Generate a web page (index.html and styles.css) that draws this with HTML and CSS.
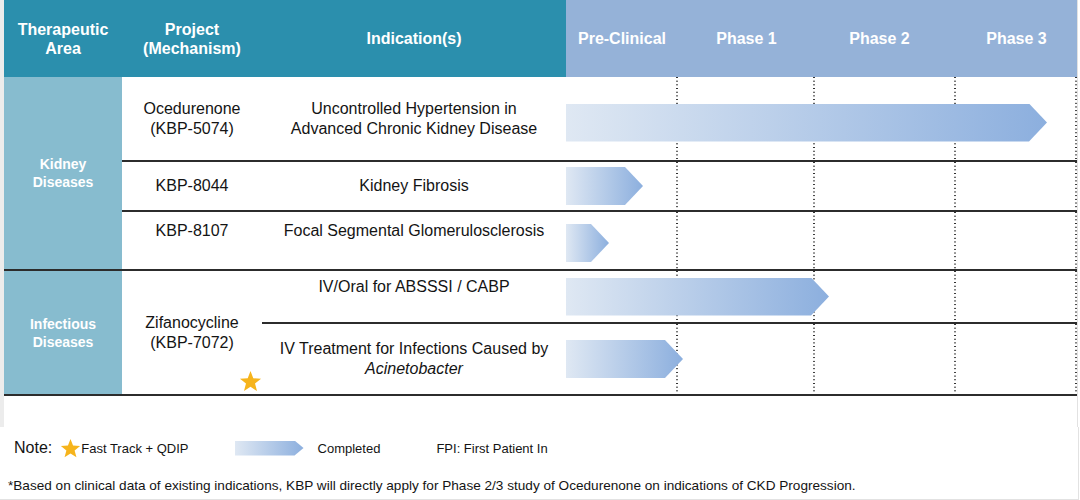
FILE: index.html
```html
<!DOCTYPE html>
<html>
<head>
<meta charset="utf-8">
<link rel="stylesheet" href="styles.css">
</head>
<body>
<div class="page">
  <div class="top">
    <div class="chart">
      <div class="head">
        <div class="hc teal">Therapeutic<br>Area</div>
        <div class="hc teal">Project<br>(Mechanism)</div>
        <div class="hc teal">Indication(s)</div>
        <div class="hc blue">Pre-Clinical</div>
        <div class="hc blue">Phase 1</div>
        <div class="hc blue p2">Phase 2</div>
        <div class="hc blue">Phase 3</div>
      </div>

      <div class="group">
        <div class="area">Kidney<br>Diseases</div>
        <div class="rows">
          <div class="row r1">
            <div class="proj">Ocedurenone<br>(KBP-5074)</div>
            <div class="ind"><span>Uncontrolled Hypertension in<br>Advanced Chronic Kidney Disease</span></div>
            <div class="track">
              <span class="ph c1"></span><span class="ph c2"></span><span class="ph c3"></span><span class="ph c4"></span>
              <span class="arrow a-low" style="width:481px"></span>
            </div>
          </div>
          <div class="row r2">
            <div class="proj">KBP-8044</div>
            <div class="ind">Kidney Fibrosis</div>
            <div class="track">
              <span class="ph c1"></span><span class="ph c2"></span><span class="ph c3"></span><span class="ph c4"></span>
              <span class="arrow" style="width:77px"></span>
            </div>
          </div>
          <div class="row r3">
            <div class="proj top9">KBP-8107</div>
            <div class="ind top9">Focal Segmental Glomerulosclerosis</div>
            <div class="track">
              <span class="ph c1"></span><span class="ph c2"></span><span class="ph c3"></span><span class="ph c4"></span>
              <span class="arrow a-low2" style="width:43px"></span>
            </div>
          </div>
        </div>
      </div>

      <div class="group">
        <div class="area">Infectious<br>Diseases</div>
        <div class="proj tall">
          <span>Zifanocycline<br>(KBP-7072)</span>
          <svg class="star" viewBox="0 0 24 24" aria-hidden="true"><polygon points="12,1 14.9,8.6 23,9.1 16.7,14.2 18.8,22 12,17.6 5.2,22 7.3,14.2 1,9.1 9.1,8.6"/></svg>
        </div>
        <div class="subs">
          <div class="sub sa">
            <div class="ind top6">IV/Oral for ABSSSI / CABP</div>
            <div class="track">
              <span class="ph c1"></span><span class="ph c2"></span><span class="ph c3"></span><span class="ph c4"></span>
              <span class="arrow" style="width:263px"></span>
            </div>
          </div>
          <div class="sub sb">
            <div class="ind"><span>IV Treatment for Infections Caused by<br><em>Acinetobacter</em></span></div>
            <div class="track">
              <span class="ph c1"></span><span class="ph c2"></span><span class="ph c3"></span><span class="ph c4"></span>
              <span class="arrow" style="width:117px"></span>
            </div>
          </div>
        </div>
      </div>
    </div>
  </div>

  <div class="foot">
    <div class="note">
      <span class="note-label">Note:</span>
      <svg class="lstar" viewBox="0 0 24 24" aria-hidden="true"><polygon points="12,1 14.9,8.6 23,9.1 16.7,14.2 18.8,22 12,17.6 5.2,22 7.3,14.2 1,9.1 9.1,8.6"/></svg>
      <span class="ft">Fast Track + QDIP</span>
      <span class="larrow"></span>
      <span class="done">Completed</span>
      <span class="fpi">FPI: First Patient In</span>
    </div>
    <div class="footnote">*Based on clinical data of existing indications, KBP will directly apply for Phase 2/3 study of Ocedurenone on indications of CKD Progression.</div>
  </div>
</div>
</body>
</html>
```
FILE: styles.css
```css
* { box-sizing: border-box; }

body {
  margin: 0;
  background: #ffffff;
  font-family: "Liberation Sans", Arial, sans-serif;
  color: #141414;
}

.page {
  width: 1080px;
  height: 500px;
  background: #ffffff;
}

.top {
  width: 1078px;
  height: 427px;
  border-left: 4px solid #ececec;
  border-right: 1px solid #e2e2e2;
  background: #ffffff;
}

.chart {
  width: 1073px;
}

/* Header */
.head {
  display: grid;
  grid-template-columns: 118px 140px 304px 112px 137px 141px 121px;
  height: 77px;
  color: #ffffff;
  font-weight: bold;
  font-size: 16px;
  line-height: 19px;
  text-align: center;
}

.hc {
  display: flex;
  align-items: center;
  justify-content: center;
}

.teal { background: #2b8fad; }
.blue { background: #95b2d8; }
.p2 { padding-right: 12px; }

/* Groups */
.group {
  display: flex;
  border-bottom: 2px solid #2c2c2c;
}

.area {
  width: 118px;
  flex: none;
  background: #87bccf;
  color: #ffffff;
  font-weight: bold;
  font-size: 14px;
  line-height: 18px;
  display: flex;
  align-items: center;
  justify-content: center;
  text-align: center;
}

.rows {
  flex: 1;
  display: flex;
  flex-direction: column;
}

.row {
  display: grid;
  grid-template-columns: 140px 304px 511px;
}

.row + .row { border-top: 2px solid #2c2c2c; }

.r1 { height: 83px; }
.r2 { height: 50px; }
.r3 { height: 59px; }

.proj, .ind {
  display: flex;
  align-items: center;
  justify-content: center;
  text-align: center;
  font-size: 16px;
  line-height: 20px;
}

.top9 { align-items: flex-start; padding-top: 9px; }
.top6 { align-items: flex-start; padding-top: 6px; }

.ind em { font-style: italic; }

.proj.tall {
  width: 140px;
  flex: none;
  position: relative;
}

.star {
  position: absolute;
  right: 0;
  bottom: 1px;
  width: 23px;
  height: 23px;
  fill: #f6b41c;
}

.subs {
  flex: 1;
  display: flex;
  flex-direction: column;
}

.sub {
  display: grid;
  grid-template-columns: 304px 511px;
}

.sa { height: 51px; }
.sb { height: 72px; border-top: 2px solid #2c2c2c; }

/* Timeline */
.track {
  display: grid;
  grid-template-columns: 112px 137px 141px 121px;
  align-items: center;
}

.ph {
  grid-row: 1;
  align-self: stretch;
  background-image: linear-gradient(#2a2a2a 0 1.3px, transparent 1.3px);
  background-size: 2px 3.7px;
  background-repeat: repeat-y;
  background-position: right top;
}

.c1 { grid-column: 1; }
.c2 { grid-column: 2; }
.c3 { grid-column: 3; }
.c4 { grid-column: 4; }

.arrow {
  grid-row: 1;
  grid-column: 1 / -1;
  justify-self: start;
  height: 38px;
  background: linear-gradient(to right, #dfe8f3, #8cafde);
  clip-path: polygon(0 0, calc(100% - 18px) 0, 100% 50%, calc(100% - 18px) 100%, 0 100%);
}

.a-low { margin-top: 8px; }
.a-low2 { margin-top: 5px; }

/* Footer */
.foot {
  width: 1079px;
  height: 73px;
  border-right: 1px solid #e2e2e2;
  border-bottom: 1px solid #e2e2e2;
  padding-top: 9px;
}

.note {
  display: flex;
  align-items: center;
  height: 24px;
  padding-left: 14px;
  font-size: 13px;
}

.note-label {
  font-size: 16px;
}

.lstar {
  width: 21px;
  height: 21px;
  margin-left: 8px;
  fill: #f6b41c;
}

.larrow {
  width: 69px;
  height: 15px;
  margin-left: 46px;
  background: linear-gradient(to right, #dfe8f3, #8cafde);
  clip-path: polygon(0 0, calc(100% - 9px) 0, 100% 50%, calc(100% - 9px) 100%, 0 100%);
}

.done { margin-left: 14px; }
.fpi { margin-left: 56px; }

.footnote {
  margin-top: 17px;
  padding-left: 8px;
  font-size: 13.6px;
  line-height: 18px;
}
```
